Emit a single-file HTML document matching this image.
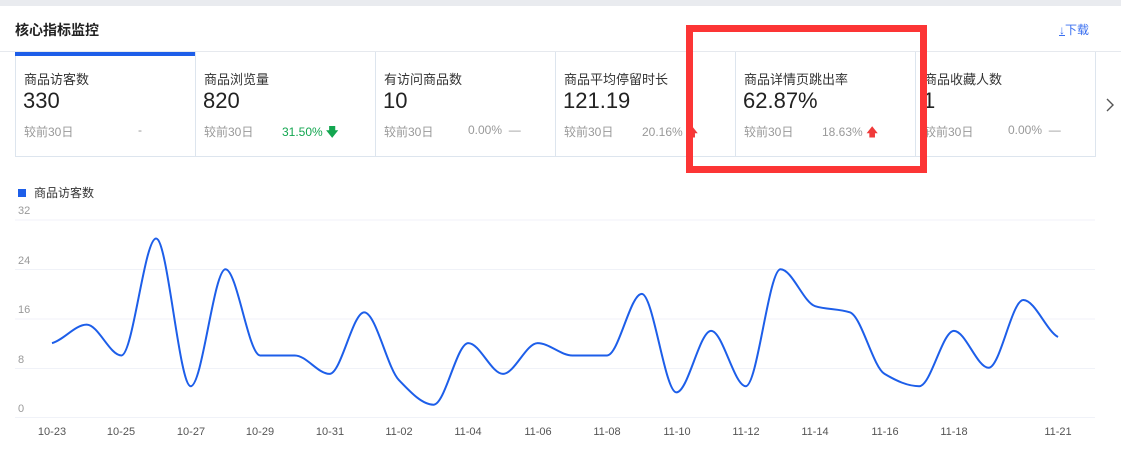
<!DOCTYPE html>
<html><head><meta charset="utf-8"><style>
*{margin:0;padding:0;box-sizing:border-box}
body{width:1121px;height:453px;background:#fff;position:relative;overflow:hidden;font-family:"Liberation Sans","Noto Sans CJK SC",sans-serif;color:#333}
.topbar{position:absolute;left:0;top:0;width:1121px;height:6px;background:#e9ebef}
.title{position:absolute;left:15px;top:20px;font-size:14px;font-weight:bold;color:#222}
.dl{position:absolute;left:1059px;top:21px;font-size:12px;color:#3a6ff0}
.hline{position:absolute;left:0;top:51px;width:1121px;height:1px;background:#e6e9ee}
.cards{position:absolute;left:15px;top:52px;width:1081px;height:105px;border:1px solid #dde5ee;border-top:none}
.card{position:absolute;top:0;width:180px;height:104px;border-right:1px solid #dde5ee}
.card .l{position:absolute;left:8px;top:17px;font-size:13px;color:#333;white-space:nowrap}
.card .v{position:absolute;left:7px;top:36px;font-size:22px;color:#222}
.card .c{position:absolute;left:8px;top:71px;font-size:12px;color:#999;white-space:nowrap}
.card .p{position:absolute;top:71px;font-size:12px;color:#999;white-space:nowrap}
.bar{position:absolute;left:15px;top:52px;width:180px;height:4px;background:#1d5ee9}
.red{position:absolute;left:686px;top:25px;width:241px;height:148px;border:7px solid #fc3535}
.legend{position:absolute;left:18px;top:184px;font-size:12px;color:#333}
.legend i{display:inline-block;width:8px;height:8px;background:#1d5ee9;margin-right:8px;vertical-align:0px}
.ax{position:absolute;font-size:11px;color:#999}
.xl{position:absolute;top:426px;font-size:11px;color:#555;transform:translateX(-50%)}
</style></head><body>
<div class="topbar"></div>
<div class="title">核心指标监控</div>
<div class="dl"><span style="text-decoration:underline">↓</span>下载</div>
<div class="hline"></div>
<div class="cards">
 <div class="card" style="left:0"><div class="l">商品访客数</div><div class="v">330</div><div class="c">较前30日</div><div class="p" style="left:122px">-</div></div>
 <div class="card" style="left:180px"><div class="l">商品浏览量</div><div class="v">820</div><div class="c">较前30日</div><div class="p" style="left:86px;color:#13a650">31.50% <b>🡇</b></div></div>
 <div class="card" style="left:360px"><div class="l">有访问商品数</div><div class="v">10</div><div class="c">较前30日</div><div class="p" style="left:92px">0.00% &nbsp;—</div></div>
 <div class="card" style="left:540px"><div class="l">商品平均停留时长</div><div class="v">121.19</div><div class="c">较前30日</div><div class="p" style="left:86px">20.16% <span style="color:#f03a3a">🡅</span></div></div>
 <div class="card" style="left:720px"><div class="l">商品详情页跳出率</div><div class="v">62.87%</div><div class="c">较前30日</div><div class="p" style="left:86px">18.63% <span style="color:#f03a3a">🡅</span></div></div>
 <div class="card" style="left:900px;border-right:none"><div class="l">商品收藏人数</div><div class="v">1</div><div class="c">较前30日</div><div class="p" style="left:92px">0.00% &nbsp;—</div></div>
</div>
<div class="bar"></div>
<svg style="position:absolute;left:1104px;top:97px" width="12" height="16"><path d="M3 2 L9 8 L3 14" fill="none" stroke="#555" stroke-width="1.4"/></svg>
<div class="red"></div>
<div class="legend"><i></i>商品访客数</div>
<svg id="ch" style="position:absolute;left:0;top:0" width="1121" height="453">
<g stroke="#f0f2f8" stroke-width="1">
<line x1="15" x2="1095" y1="220" y2="220"/><line x1="15" x2="1095" y1="269.5" y2="269.5"/><line x1="15" x2="1095" y1="319" y2="319"/><line x1="15" x2="1095" y1="368.5" y2="368.5"/><line x1="15" x2="1095" y1="417.5" y2="417.5"/>
</g>
<path id="ln" fill="none" stroke="#1d5ee9" stroke-width="2"/>
</svg>
<div class="ax" style="left:18px;top:205px">32</div>
<div class="ax" style="left:18px;top:255px">24</div>
<div class="ax" style="left:18px;top:304px">16</div>
<div class="ax" style="left:18px;top:354px">8</div>
<div class="ax" style="left:18px;top:403px">0</div>
<div class="xl" style="left:52px">10-23</div><div class="xl" style="left:121px">10-25</div><div class="xl" style="left:191px">10-27</div><div class="xl" style="left:260px">10-29</div><div class="xl" style="left:330px">10-31</div><div class="xl" style="left:399px">11-02</div><div class="xl" style="left:468px">11-04</div><div class="xl" style="left:538px">11-06</div><div class="xl" style="left:607px">11-08</div><div class="xl" style="left:677px">11-10</div><div class="xl" style="left:746px">11-12</div><div class="xl" style="left:815px">11-14</div><div class="xl" style="left:885px">11-16</div><div class="xl" style="left:954px">11-18</div><div class="xl" style="left:1058px">11-21</div>
<script>
var v=[12,15,10,29,5,24,10,10,7,17,6,2,12,7,12,10,10,20,4,14,5,24,18,17,7,5,14,8,19,13];
var h=34.69,n=v.length;
var y=v.map(function(a){return 417-a*6.156;});
var s=[];for(var i=0;i<n-1;i++)s.push(y[i+1]-y[i]);
var m=[];for(var i=0;i<n;i++){
 if(i==0)m.push(s[0]*0.5);else if(i==n-1)m.push(s[n-2]*0.5);
 else if(s[i-1]*s[i]<=0)m.push(0);else m.push(2/(1/s[i-1]+1/s[i]));}
var d="M52 "+y[0];
for(var i=0;i<n-1;i++){var x0=52+i*h,x1=x0+h;
d+=" C"+(x0+h/3)+" "+(y[i]+m[i]/3)+" "+(x1-h/3)+" "+(y[i+1]-m[i+1]/3)+" "+x1+" "+y[i+1];}
document.getElementById("ln").setAttribute("d",d);
</script>
</body></html>
